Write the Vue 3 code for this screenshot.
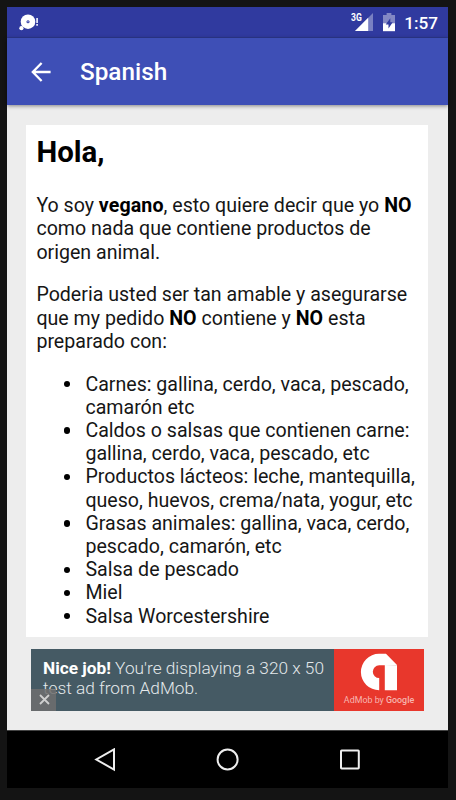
<template>
  <div class="device">
    <div class="screen">
      <!-- Status bar -->
      <div class="status-bar">
        <svg class="status-notice" width="20" height="18" viewBox="0 0 20 18">
          <circle cx="9" cy="7.7" r="7.3" fill="#fff" />
          <circle cx="2.4" cy="14.2" r="2.1" fill="#fff" />
          <circle cx="9" cy="7.7" r="1.5" fill="#303a9f" />
          <rect x="7.7" y="7.1" width="2.6" height="1.2" fill="#7d86cc" />
          <path d="M17.2 4h1.8v5h-1.8zM17.2 10h1.8v1.7h-1.8z" fill="#dfe2f5" />
        </svg>
        <div class="status-right">
          <div class="signal">
            <span class="network">3G</span>
            <svg width="18" height="18" viewBox="0 0 18 18">
              <path d="M18 0V18H0z" fill="#7980c2" />
              <path d="M13.2 4.8V18H0z" fill="#fff" />
            </svg>
          </div>
          <svg class="battery" width="12" height="19" viewBox="0 0 12 19">
            <path d="M3.6 0h4.8v2H12v9H0V2h3.6z" fill="#8388c4" />
            <path d="M0 10.3h12V18.2H0z" fill="#fff" />
            <path d="M7.3 5.2L2.7 11.4h2.8v4.2l4.2-6.4H7.3z" fill="#303a9f" />
          </svg>
          <span class="clock">{{ time }}</span>
        </div>
      </div>

      <!-- Toolbar -->
      <header class="toolbar">
        <svg class="back" width="20" height="20" viewBox="0 0 20 20">
          <path d="M10.6 1L1.8 10l8.8 9M1.8 10H19.6" fill="none" stroke="#fff" stroke-width="2.3" />
        </svg>
        <h1 class="title">Spanish</h1>
      </header>

      <main class="content">
        <section class="card">
          <h2>Hola,</h2>
          <p>
            Yo soy <b>vegano</b>, esto quiere decir que yo <b>NO</b><br />
            como nada que contiene productos de<br />
            origen animal.
          </p>
          <p>
            Poderia usted ser tan amable y asegurarse<br />
            que my pedido <b>NO</b> contiene y <b>NO</b> esta<br />
            preparado con:
          </p>
          <ul>
            <li v-for="item in items" :key="item[0]">
              <span v-for="line in item" :key="line" class="line">{{ line }}</span>
            </li>
          </ul>
        </section>

        <!-- Ad banner -->
        <aside class="ad">
          <div class="ad-text"><b>Nice job!</b> You're displaying a 320 x 50<br />test ad from AdMob.</div>
          <div class="ad-brand">
            <svg width="38" height="38" viewBox="0 0 38 38">
              <path d="M19 0.8H26L37 12V37.2H24.8V12.3H19.2A6.4 6.4 0 0 0 19.2 25.1V37.2A18.2 18.2 0 0 1 19 0.8z" fill="#fff" />
              <path d="M24.8 12.3L37 12V12.8z" fill="#e4d6d5" />
            </svg>
            <span class="ad-label">AdMob by <b>Google</b></span>
          </div>
          <button class="ad-close" aria-label="Cerrar">
            <svg width="11" height="11" viewBox="0 0 11 11">
              <path d="M1 1l9 9M10 1L1 10" stroke="#cfcfcf" stroke-width="1.8" />
            </svg>
          </button>
        </aside>
      </main>

      <!-- Navigation bar -->
      <nav class="nav-bar">
        <svg width="24" height="24" viewBox="0 0 24 24">
          <path d="M21 1.4V21.6L3.3 11.5z" />
        </svg>
        <svg width="24" height="24" viewBox="0 0 24 24">
          <circle cx="11.6" cy="11.5" r="10" />
        </svg>
        <svg width="24" height="24" viewBox="0 0 24 24">
          <rect x="3" y="2.6" width="17.8" height="17.8" rx="0.6" />
        </svg>
      </nav>
    </div>
  </div>
</template>

<script setup>
import { ref } from 'vue'

const time = ref('1:57')

const items = [
  ['Carnes: gallina, cerdo, vaca, pescado,', 'camarón etc'],
  ['Caldos o salsas que contienen carne:', 'gallina, cerdo, vaca, pescado, etc'],
  ['Productos lácteos: leche, mantequilla,', 'queso, huevos, crema/nata, yogur, etc'],
  ['Grasas animales: gallina, vaca, cerdo,', 'pescado, camarón, etc'],
  ['Salsa de pescado'],
  ['Miel'],
  ['Salsa Worcestershire']
]
</script>

<style>
body {
  margin: 0;
  background: #141414;
}
</style>

<style scoped>
.device {
  box-sizing: border-box;
  width: 456px;
  height: 800px;
  padding: 7px 8px 12px 7px;
  background: #141414;
  font-family: Roboto, "Liberation Sans", sans-serif;
  overflow: hidden;
}

.screen {
  display: flex;
  flex-direction: column;
  height: 781px;
  background: #ededed;
}

.status-bar {
  box-sizing: border-box;
  display: flex;
  justify-content: space-between;
  height: 31px;
  padding: 6px 10px 0 12px;
  background: #303a9f;
  border-bottom: 1px solid #2d3890;
}

.status-notice {
  margin-top: 1px;
}

.status-right {
  display: flex;
}

.signal {
  position: relative;
  height: 18px;
  margin-right: 10px;
}

.network {
  position: absolute;
  left: -4px;
  top: 0;
  color: #fff;
  font-size: 11px;
  font-weight: 700;
  line-height: 10px;
  transform: scaleX(0.78);
  transform-origin: left;
}

.battery {
  margin-right: 9px;
}

.clock {
  color: #fff;
  font-size: 17.2px;
  font-weight: 500;
  line-height: 20px;
}

.toolbar {
  position: relative;
  display: flex;
  align-items: center;
  height: 67px;
  padding-left: 24px;
  background: #3e4fb6;
  box-shadow: 0 1px 4px rgba(0, 0, 0, 0.45);
}

.title {
  margin: 1px 0 0 29px;
  color: #fff;
  font-size: 24.3px;
  font-weight: 500;
  line-height: 30px;
}

.content {
  flex: 1;
  padding: 20px 20px 0 19px;
}

.card {
  box-sizing: border-box;
  height: 512px;
  padding: 10.3px 0 0 10.4px;
  background: #fff;
  color: #161616;
  font-size: 19.6px;
  line-height: 23.2px;
  white-space: nowrap;
}

.card h2 {
  margin: 0 0 24.4px;
  color: #000;
  font-size: 29.4px;
  font-weight: 700;
  line-height: 34.4px;
}

.card p {
  margin: 0 0 19.6px;
}

.card b {
  color: #000;
  letter-spacing: 0.1px;
}

.card ul {
  margin: 0;
  padding-left: 49px;
  list-style: none;
}

.card li {
  position: relative;
}

.card li::before {
  content: '';
  position: absolute;
  left: -21.5px;
  top: 8.5px;
  width: 6.4px;
  height: 6.4px;
  border-radius: 50%;
  background: #000;
}

.line {
  display: block;
}

.ad {
  position: relative;
  display: flex;
  width: 393px;
  height: 62px;
  margin: 12px 0 0 5px;
  background: #455a64;
}

.ad-text {
  box-sizing: border-box;
  width: 303px;
  padding: 8.5px 0 0 12px;
  color: #e4e9eb;
  font-size: 17.25px;
  font-weight: 300;
  line-height: 20.6px;
  white-space: nowrap;
}

.ad-text b {
  color: #fff;
  font-weight: 700;
}

.ad-brand {
  display: flex;
  flex-direction: column;
  align-items: center;
  width: 90px;
  padding-top: 4px;
  box-sizing: border-box;
  background: #e8372c;
}

.ad-label {
  margin-top: 4px;
  color: #f7b5b0;
  font-size: 8.9px;
  line-height: 11px;
  white-space: nowrap;
}

.ad-label b {
  font-weight: 500;
}

.ad-close {
  position: absolute;
  left: 0;
  bottom: 0;
  display: flex;
  align-items: center;
  justify-content: center;
  width: 25px;
  height: 22px;
  padding: 0 0 2px 1px;
  box-sizing: border-box;
  border: 0;
  background: rgba(110, 110, 110, 0.85);
}

.nav-bar {
  display: flex;
  align-items: center;
  justify-content: center;
  gap: 98.5px;
  height: 57px;
  border-top: 1px solid #444;
  background: #000;
}

.nav-bar svg {
  fill: none;
  stroke: #eee;
  stroke-width: 2;
}
</style>
